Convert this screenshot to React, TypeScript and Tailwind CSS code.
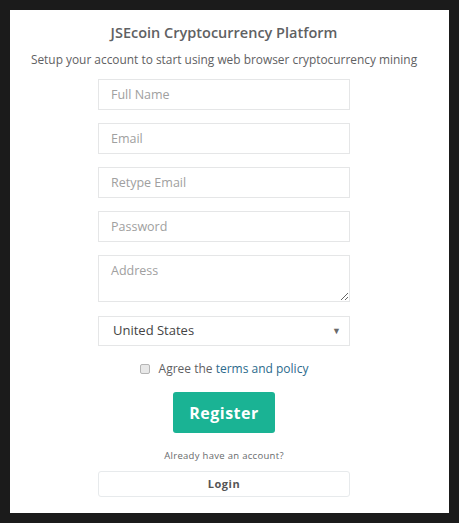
import React from 'react';

const fields = ['Full Name', 'Email', 'Retype Email', 'Password'];

const App = () => {
  return (
    <div className="w-[459px] h-[523px] bg-[#1b1b1b] p-[10px] font-['Open_Sans',sans-serif]">
      <div className="bg-white h-[503px] pr-[11px] flex flex-col items-center">
        <h1 className="mt-[13px] text-[14.5px] leading-[20px] font-semibold text-[#5f6163]">
          JSEcoin Cryptocurrency Platform
        </h1>
        <p className="mt-[8px] text-[11.9px] leading-[16px] text-[#5f6163] whitespace-nowrap">
          Setup your account to start using web browser cryptocurrency mining
        </p>

        <form className="mt-[12px] w-[252px] flex flex-col gap-[13px]">
          {fields.map((f) => (
            <input
              key={f}
              type={f === 'Password' ? 'password' : 'text'}
              placeholder={f}
              className="h-[31px] w-full border border-[#e5e6e7] px-[12px] text-[12.5px] text-[#333] placeholder:text-[#a0a0a0] outline-none"
            />
          ))}
          <textarea
            placeholder="Address"
            className="h-[47px] w-full border border-[#e5e6e7] px-[12px] pt-[6px] text-[12.5px] leading-[18px] text-[#333] placeholder:text-[#a0a0a0] outline-none"
          />
          <div className="mt-[1px] h-[30px] w-full border border-[#e5e6e7] pl-[14px] pr-[8px] flex items-center justify-between text-[13px] text-[#444]">
            <span>United States</span>
            <span className="text-[9px] text-[#6a6a6a]">▼</span>
          </div>
        </form>

        <label className="mt-[13px] flex items-center gap-[9px] text-[12px] leading-[20px] text-[#5f6163]">
          <span className="w-[10px] h-[10px] rounded-[2px] border border-[#b5b5b5] bg-[#e8e8e8]" />
          <span>
            Agree the <span className="text-[#2b6a8c]">terms and policy</span>
          </span>
        </label>

        <button className="mt-[13px] w-[102px] h-[41px] rounded-[3px] bg-[#1ab394] text-white text-[16px] font-bold tracking-[0.5px]">
          Register
        </button>

        <p className="mt-[16px] text-[9.5px] leading-[14px] text-[#676a6c] tracking-[0.3px]">
          Already have an account?
        </p>

        <button className="mt-[8px] w-[252px] h-[26px] rounded-[3px] border border-[#e7eaec] bg-white text-[11px] font-bold text-[#555] tracking-[0.5px]">
          Login
        </button>
      </div>
    </div>
  );
};

export default App;
